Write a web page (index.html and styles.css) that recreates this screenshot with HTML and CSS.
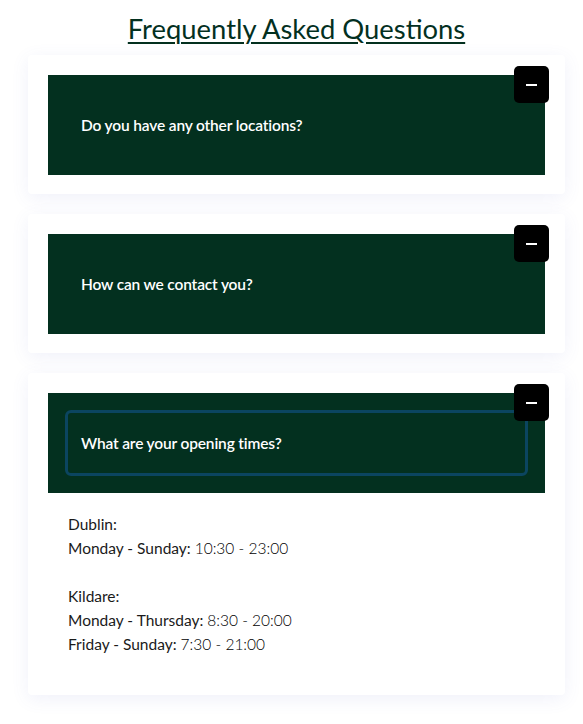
FILE: index.html
```html
<!DOCTYPE html>
<html lang="en">
<head>
<meta charset="utf-8">
<title>FAQ</title>
<link rel="stylesheet" href="styles.css">
</head>
<body>
<main class="faq">
  <h1 class="faq-title"><a href="#">Frequently Asked Questions</a></h1>

  <section class="card">
    <div class="q-wrap">
      <button class="q">Do you have any other locations?</button>
    </div>
    <span class="toggle"><span class="bar"></span></span>
  </section>

  <section class="card">
    <div class="q-wrap">
      <button class="q">How can we contact you?</button>
    </div>
    <span class="toggle"><span class="bar"></span></span>
  </section>

  <section class="card">
    <div class="q-wrap">
      <button class="q focused">What are your opening times?</button>
    </div>
    <span class="toggle"><span class="bar"></span></span>
    <div class="answer">
      <div>Dublin:</div>
      <div>Monday - Sunday: <span class="time">10:30 - 23:00</span></div>
      <div class="blank">&nbsp;</div>
      <div>Kildare:</div>
      <div>Monday - Thursday: <span class="time">8:30 - 20:00</span></div>
      <div>Friday - Sunday: <span class="time">7:30 - 21:00</span></div>
    </div>
  </section>
</main>
</body>
</html>
```

FILE: styles.css
```css
* { box-sizing: border-box; }
html, body {
  margin: 0;
  padding: 0;
  background: #ffffff;
  font-family: "Lato", "Liberation Sans", sans-serif;
}
.faq {
  width: 537px;
  margin-left: 28px;
  padding-bottom: 20px;
}
.faq-title {
  margin: 12px 0 9px;
  font-size: 27.4px;
  line-height: 34px;
  font-weight: 400;
  text-align: center;
}
.faq-title a {
  color: #03301f;
  text-decoration: underline;
  text-decoration-thickness: 2px;
  text-underline-offset: 3px;
}
.card {
  position: relative;
  background: #ffffff;
  border-radius: 4px;
  padding: 20px 20px 19px;
  margin-bottom: 20px;
  box-shadow: 0 4px 18px rgba(90, 100, 200, 0.09);
}
.q-wrap {
  background: #03301f;
  padding: 17px;
  height: 100px;
}
.q {
  display: flex;
  align-items: center;
  width: 100%;
  height: 66px;
  padding: 0 13px;
  background: transparent;
  border: 3px solid transparent;
  border-radius: 6px;
  color: #ffffff;
  font-family: "Lato", "Liberation Sans", sans-serif;
  font-size: 15.5px;
  font-weight: 600;
  letter-spacing: -0.15px;
  text-align: left;
  cursor: pointer;
}
.q.focused {
  border-color: #0b4560;
}
.toggle {
  position: absolute;
  top: 11px;
  right: 16px;
  width: 35px;
  height: 37px;
  background: #000000;
  border-radius: 5px;
  display: flex;
  align-items: center;
  justify-content: center;
}
.bar {
  display: block;
  width: 11px;
  height: 2px;
  background: #ffffff;
}
.answer {
  padding: 19px 20px 20px;
  font-size: 15.5px;
  line-height: 24px;
  color: #1a1a1a;
  font-weight: 400;
}
.time {
  font-weight: 300;
  color: #000000;
}
```
